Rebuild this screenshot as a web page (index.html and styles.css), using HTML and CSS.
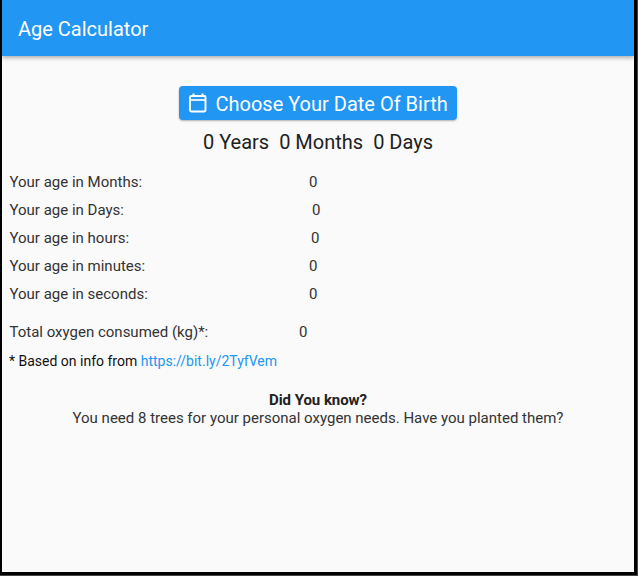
FILE: index.html
```html
<!DOCTYPE html>
<html lang="en">
<head>
<meta charset="utf-8">
<title>Age Calculator</title>
<link rel="stylesheet" href="styles.css">
</head>
<body>
<div class="app">
  <header class="bar"><h1>Age Calculator</h1></header>
  <main>
    <button class="choose" type="button">
      <svg width="18" height="20" viewBox="0 0 18 20" fill="none" stroke="currentColor"><path d="M4.500 .5v3M13.500 .5v3" stroke-width="2"/><rect x="1" y="3" width="15.500" height="15.500" rx="1.200" stroke-width="1.900"/><path d="M1 7h15.500" stroke-width="1.700"/></svg>
      <span>Choose Your Date Of Birth</span>
    </button>
    <div class="age"><span>0 Years</span><span>0 Months</span><span>0 Days</span></div>
    <dl class="stats">
      <div class="row"><dt>Your age in Months:</dt><dd class="m">0</dd></div>
      <div class="row"><dt>Your age in Days:</dt><dd class="d">0</dd></div>
      <div class="row"><dt>Your age in hours:</dt><dd class="h">0</dd></div>
      <div class="row"><dt>Your age in minutes:</dt><dd class="m">0</dd></div>
      <div class="row"><dt>Your age in seconds:</dt><dd class="m">0</dd></div>
      <div class="row oxygen"><dt>Total oxygen consumed (kg)*:</dt><dd class="o">0</dd></div>
    </dl>
    <p class="note">* Based on info from <a>https://bit.ly/2TyfVem</a></p>
    <section class="fact"><h2>Did You know?</h2><p>You need 8 trees for your personal oxygen needs. Have you planted them?</p></section>
  </main>
</div>
</body>
</html>
```
FILE: styles.css
```css
* { box-sizing: border-box; margin: 0; padding: 0; }
body { font-family: Roboto, "Liberation Sans", sans-serif; background: #444; color: #212121; }
.app { width: 637px; height: 575px; border: solid #000; border-width: 0 3px 3px 2px; background: #fafafa; }
.bar { height: 56px; padding: 2px 16px 0; display: flex; align-items: center; background: #2196f3; color: #fff; box-shadow: 0 2px 4px rgba(0,0,0,.3); }
.bar h1 { font-size: 20px; font-weight: 400; line-height: 24px; }
main { display: flex; flex-direction: column; align-items: center; padding-top: 30px; }
.choose { display: flex; align-items: center; gap: 9px; width: 278px; height: 34px; padding-left: 9.5px; border: 0; border-radius: 4px; background: #2196f3; color: #fff; font: 20px/24px Roboto, sans-serif; white-space: nowrap; box-shadow: 0 1px 2px rgba(0,0,0,.3); }
.choose svg { flex: none; }
.choose span { padding-top: 2px; }
.age { display: flex; gap: 10px; margin-top: 10px; font-size: 20px; line-height: 24px; }
.stats { width: 100%; margin-top: 14px; padding-left: 7.5px; font-size: 15px; color: #333; }
.row { display: flex; height: 28px; align-items: center; }
dt { width: 299.5px; }
.d { margin-left: 3px; }
.h { margin-left: 2px; }
.oxygen { margin-top: 10px; }
.o { margin-left: -10px; }
.note { align-self: flex-start; margin: 7px 0 0 7px; font-size: 14px; line-height: 16px; color: #111; }
.note a { color: #2196f3; }
.fact { margin-top: 22px; text-align: center; font-size: 15px; line-height: 18px; color: #333; }
.fact h2 { font-size: 15px; font-weight: 700; letter-spacing: -.05px; color: #212121; }
```
